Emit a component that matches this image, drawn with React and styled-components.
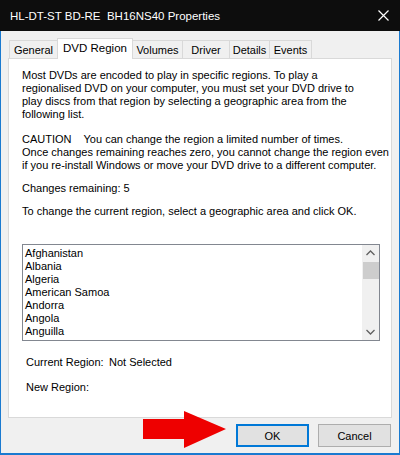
import React from "react";
import styled, { createGlobalStyle } from "styled-components";

const Global = createGlobalStyle`
  html, body { margin: 0; padding: 0; background: #ffffff; }
  * { box-sizing: border-box; }
`;

const regions = [
  "Afghanistan",
  "Albania",
  "Algeria",
  "American Samoa",
  "Andorra",
  "Angola",
  "Anguilla",
  "Antigua and Barbuda",
];

// widths taken from the dialog
const tabs = [
  { name: "General", w: 49 },
  { name: "DVD Region", w: 76, active: true },
  { name: "Volumes", w: 51 },
  { name: "Driver", w: 48 },
  { name: "Details", w: 41 },
  { name: "Events", w: 43 },
];

function App() {
  return (
    <>
      <Global />
      <Window>
        <TitleBar>
          <Title>HL-DT-ST BD-RE  BH16NS40 Properties</Title>
          <CloseBtn>
            <svg width="11" height="11" viewBox="0 0 11 11">
              <path d="M0.5 0.5 L10.5 10.5 M10.5 0.5 L0.5 10.5" stroke="#fff" strokeWidth="1.2" />
            </svg>
          </CloseBtn>
        </TitleBar>

        <Body>
          <TabRow>
            {tabs.map((t) => (
              <Tab key={t.name} $active={t.active} $w={t.w}>{t.name}</Tab>
            ))}
          </TabRow>

          <Panel>
            <Para>
              Most DVDs are encoded to play in specific regions. To play a<br />
              regionalised DVD on your computer, you must set your DVD drive to<br />
              play discs from that region by selecting a geographic area from the<br />
              following list.
            </Para>
            <Para $gap={12}>
              CAUTION&nbsp;&nbsp;&nbsp; You can change the region a limited number of times.<br />
              Once changes remaining reaches zero, you cannot change the region even<br />
              if you re-install Windows or move your DVD drive to a different computer.
            </Para>
            <Para $gap={10}>Changes remaining: 5</Para>
            <Para $gap={10}>To change the current region, select a geographic area and click OK.</Para>

            <ListBox>
              <Items>
                {regions.map((r) => (
                  <Item key={r}>{r}</Item>
                ))}
              </Items>
              <ScrollBar>
                <svg width="17" height="17" viewBox="0 0 17 17">
                  <path d="M4.5 10 L8.5 6 L12.5 10" stroke="#606060" strokeWidth="1.3" fill="none" />
                </svg>
                <Thumb />
                <Spacer />
                <svg width="17" height="17" viewBox="0 0 17 17">
                  <path d="M4.5 7 L8.5 11 L12.5 7" stroke="#606060" strokeWidth="1.3" fill="none" />
                </svg>
              </ScrollBar>
            </ListBox>

            <RegionRow $gap={15}>
              <Label>Current Region:</Label>
              <span>Not Selected</span>
            </RegionRow>
            <RegionRow $gap={12}>
              <Label>New Region:</Label>
            </RegionRow>
          </Panel>

          <Footer>
            <Arrow width="84" height="40" viewBox="0 0 84 40">
              <polygon points="0,8 41,8 41,0 83,18 41,37 41,28 0,28" fill="#ee0000" />
            </Arrow>
            <Button $default>OK</Button>
            <Button>Cancel</Button>
          </Footer>
        </Body>
      </Window>
    </>
  );
}

const Window = styled.div`
  width: 400px;
  height: 455px;
  display: flex;
  flex-direction: column;
  background: #f0f0f0;
  border: 1px solid #1a7ad0;
  border-top: none;
  border-bottom-width: 2px;
  font-family: "Liberation Sans", Arial, sans-serif;
  font-size: 11px;
  color: #000;
`;

const TitleBar = styled.div`
  height: 31px;
  background: #0d0d0d;
  color: #fff;
  display: flex;
  align-items: center;
  justify-content: space-between;
  padding-left: 10px;
  margin: 0 -1px;
`;

const Title = styled.span`
  font-size: 11.5px;
  white-space: pre;
`;

const CloseBtn = styled.div`
  width: 30px;
  height: 31px;
  display: flex;
  align-items: center;
  justify-content: center;
  margin-right: 2px;
`;

const Body = styled.div`
  flex: 1;
  padding: 7px 7px 0 7px;
  position: relative;
`;

const TabRow = styled.div`
  display: flex;
  align-items: flex-end;
  height: 20px;
  padding-left: 2px;
`;

const Tab = styled.div`
  width: ${(p) => p.$w}px;
  height: ${(p) => (p.$active ? "21px" : "18px")};
  padding-bottom: ${(p) => (p.$active ? "2px" : "0")};
  margin-left: -1px;
  margin-bottom: ${(p) => (p.$active ? "-1px" : "0")};
  background: ${(p) => (p.$active ? "#ffffff" : "#f0f0f0")};
  border: 1px solid #d9d9d9;
  border-bottom: none;
  display: flex;
  align-items: center;
  justify-content: center;
  position: relative;
  z-index: ${(p) => (p.$active ? 2 : 1)};
  font-size: ${(p) => (p.$active ? "11.5px" : "11px")};
  white-space: nowrap;
`;

const Panel = styled.div`
  height: 360px;
  background: #fff;
  border: 1px solid #d9d9d9;
  padding: 10px 11px 0 13px;
  display: flex;
  flex-direction: column;
`;

const Para = styled.p`
  margin: ${(p) => p.$gap || 0}px 0 0;
  line-height: 13px;
  white-space: nowrap;
`;

const ListBox = styled.div`
  margin-top: 26px;
  height: 97px;
  border: 1px solid #828790;
  display: flex;
  overflow: hidden;
`;

const Items = styled.div`
  flex: 1;
  padding: 2px 0 0 2px;
  overflow: hidden;
`;

const Item = styled.div`
  line-height: 13px;
  height: 13px;
`;

const ScrollBar = styled.div`
  width: 17px;
  background: #f0f0f0;
  display: flex;
  flex-direction: column;
`;

const Thumb = styled.div`
  height: 17px;
  margin: 0 0 0 1px;
  background: #cdcdcd;
`;

const Spacer = styled.div`
  flex: 1;
`;

const RegionRow = styled.div`
  margin-top: ${(p) => p.$gap}px;
  line-height: 13px;
  display: flex;
  padding-left: 4px;
  white-space: nowrap;
`;

const Label = styled.span`
  width: 83px;
`;

const Footer = styled.div`
  display: flex;
  justify-content: flex-end;
  gap: 9px;
  padding: 6px 1px 0 0;
`;

const Button = styled.div`
  width: 73px;
  height: 23px;
  display: flex;
  align-items: center;
  justify-content: center;
  background: #e1e1e1;
  border: 1px solid ${(p) => (p.$default ? "#0078d7" : "#adadad")};
  box-shadow: ${(p) => (p.$default ? "inset 0 0 0 1px #0078d7" : "none")};
`;

const Arrow = styled.svg`
  position: absolute;
  left: 142px;
  bottom: 2px;
  z-index: 3;
`;

export default App;
